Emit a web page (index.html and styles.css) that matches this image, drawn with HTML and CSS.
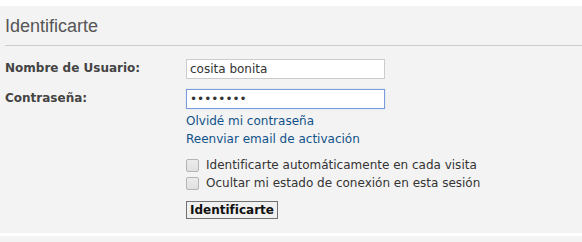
FILE: index.html
```html
<!DOCTYPE html>
<html lang="es">
<head>
  <meta charset="UTF-8">
  <title>Identificarte</title>
  <link rel="stylesheet" href="styles.css">
</head>
<body>
  <div class="panel">
    <h2 class="panel-title">Identificarte</h2>
    <form class="login-form">
      <div class="row">
        <label class="row-label" for="username">Nombre de Usuario:</label>
        <div class="row-field">
          <input type="text" id="username" class="inputbox" value="cosita bonita">
        </div>
      </div>
      <div class="row">
        <label class="row-label" for="password">Contraseña:</label>
        <div class="row-field">
          <input type="password" id="password" class="inputbox focused" value="secreta1">
          <a href="#" class="link">Olvidé mi contraseña</a>
          <a href="#" class="link">Reenviar email de activación</a>
        </div>
      </div>
      <div class="row">
        <div class="row-label"></div>
        <div class="row-field checks">
          <label class="check"><input type="checkbox"> Identificarte automáticamente en cada visita</label>
          <label class="check"><input type="checkbox"> Ocultar mi estado de conexión en esta sesión</label>
        </div>
      </div>
      <div class="row">
        <div class="row-label"></div>
        <div class="row-field">
          <button type="submit" class="button">Identificarte</button>
        </div>
      </div>
    </form>
  </div>
  <div class="panel-next"></div>
</body>
</html>
```

FILE: styles.css
```css
body {
  margin: 0;
  padding-top: 6px;
  background: #fff;
  font-family: "DejaVu Sans", Verdana, sans-serif;
  font-size: 12px;
  color: #333;
}

.panel {
  background: #f3f3f3;
  padding: 0 0 13px 5px;
  height: 214px;
}

.panel-title {
  margin: 0;
  padding: 10px 0 8px 0;
  font-family: "Liberation Sans", Arial, sans-serif;
  font-weight: normal;
  font-size: 18px;
  color: #555;
  border-bottom: 1px solid #ccc;
}

.login-form {
  padding-top: 13px;
}

.row {
  display: flex;
  margin-bottom: 10px;
}

.row-label {
  width: 181px;
  font-weight: bold;
  color: #444;
  padding-top: 2px;
}

.row-field {
  display: flex;
  flex-direction: column;
  align-items: flex-start;
}

.inputbox {
  width: 199px;
  height: 20px;
  box-sizing: border-box;
  padding: 1px 3px;
  border: 1px solid #ccc;
  background: #fff;
  font-family: "DejaVu Sans", Verdana, sans-serif;
  font-size: 12px;
  color: #333;
  outline: none;
}

.inputbox.focused {
  border-color: #7b9ddb;
  box-shadow: 0 0 1px #a6c0ee;
}

.link {
  color: #105289;
  text-decoration: none;
  line-height: 18px;
}

.link:first-of-type {
  margin-top: 3px;
}

.checks {
  gap: 4px;
}

.check {
  display: flex;
  align-items: center;
  color: #333;
}

.check input {
  appearance: none;
  margin: 0 7px 0 0;
  width: 13px;
  height: 13px;
  border: 1px solid #b4b4b4;
  border-radius: 2px;
  background: linear-gradient(#ececec, #e0e0e0);
}

.button {
  margin-top: 1px;
  font-family: "DejaVu Sans", Verdana, sans-serif;
  font-weight: bold;
  font-size: 12px;
  color: #111;
  background: #f0f0f0;
  border: 1px solid #707070;
  padding: 1px 3px;
  border-radius: 0;
}

.panel-next {
  margin-top: 3px;
  height: 10px;
  background: #f3f3f3;
}
```
